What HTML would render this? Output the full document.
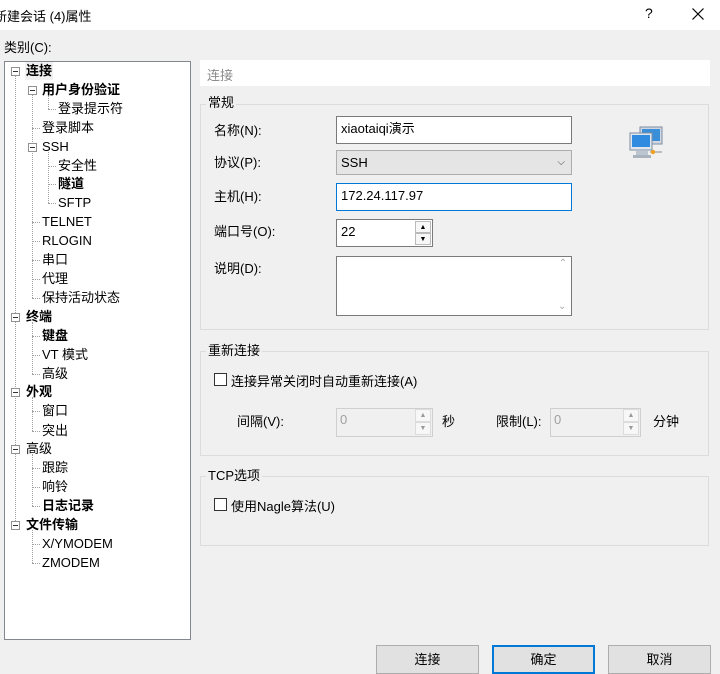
<!DOCTYPE html>
<html><head><meta charset="utf-8"><style>
*{margin:0;padding:0;box-sizing:border-box}
body{width:720px;height:674px;background:#f0f0f0;font-family:"Liberation Sans","Noto Sans CJK SC",sans-serif;font-size:13px;color:#000;position:relative;overflow:hidden}
.a{position:absolute;white-space:nowrap}
.t{position:absolute;line-height:18px;height:18px;white-space:nowrap}
.b{font-weight:bold}
.vl{position:absolute;border-left:1px dotted #a0a0a0;width:0}
.hl{position:absolute;border-top:1px dotted #a0a0a0;height:0}
.bx{position:absolute;width:9px;height:9px;border:1px solid #919191;background:#fff}
.bx:after{content:"";position:absolute;left:1px;top:3px;width:5px;height:1px;background:#333}
.inp{position:absolute;background:#fff;border:1px solid #7a7a7a;padding-left:4px;line-height:24px}
.grp{position:absolute;border:1px solid #dcdcdc}
.gl{position:absolute;background:#f0f0f0;padding:0 2px;line-height:16px}
.btn{position:absolute;top:645px;height:29px;width:103px;background:#e1e1e1;border:1px solid #adadad;text-align:center;line-height:27px}
.cb{position:absolute;width:13px;height:13px;border:1px solid #333;background:#fff}
.spin{position:absolute;border:1px solid #cfcfcf;background:#f0f0f0}
.sb{position:absolute;width:16px;height:13px;border:1px solid #dcdcdc;background:#f7f7f7;font-size:7px;text-align:center;line-height:11px;color:#999}
</style></head><body>
<div class="a" style="left:0;top:0;width:720px;height:30px;background:#fff"></div>
<div class="a" style="left:-6px;top:6px;font-size:13px">新建会话 (4)属性</div>
<div class="a" style="left:645px;top:5px;font-size:14px">?</div>
<svg class="a" style="left:692px;top:8px" width="12" height="12"><path d="M0.5 0.5L11.5 11.5M11.5 0.5L0.5 11.5" stroke="#000" stroke-width="1.2"/></svg>
<div class="a" style="left:4px;top:37px">类别(C):</div>

<div class="a" style="left:4px;top:61px;width:187px;height:579px;background:#fff;border:1px solid #828790"></div>
<div class="vl" style="left:15px;top:76px;height:449px"></div>
<div class="vl" style="left:32px;top:95px;height:203px"></div>
<div class="vl" style="left:32px;top:322px;height:52px"></div>
<div class="vl" style="left:32px;top:397px;height:34px"></div>
<div class="vl" style="left:32px;top:454px;height:52px"></div>
<div class="vl" style="left:32px;top:530px;height:33px"></div>
<div class="vl" style="left:48px;top:95px;height:14px"></div>
<div class="vl" style="left:48px;top:152px;height:51px"></div>
<div class="hl" style="left:32px;top:128px;width:8px"></div>
<div class="hl" style="left:32px;top:222px;width:8px"></div>
<div class="hl" style="left:32px;top:241px;width:8px"></div>
<div class="hl" style="left:32px;top:260px;width:8px"></div>
<div class="hl" style="left:32px;top:279px;width:8px"></div>
<div class="hl" style="left:32px;top:298px;width:8px"></div>
<div class="hl" style="left:32px;top:336px;width:8px"></div>
<div class="hl" style="left:32px;top:355px;width:8px"></div>
<div class="hl" style="left:32px;top:374px;width:8px"></div>
<div class="hl" style="left:32px;top:411px;width:8px"></div>
<div class="hl" style="left:32px;top:431px;width:8px"></div>
<div class="hl" style="left:32px;top:468px;width:8px"></div>
<div class="hl" style="left:32px;top:487px;width:8px"></div>
<div class="hl" style="left:32px;top:506px;width:8px"></div>
<div class="hl" style="left:32px;top:544px;width:8px"></div>
<div class="hl" style="left:32px;top:563px;width:8px"></div>
<div class="hl" style="left:48px;top:109px;width:8px"></div>
<div class="hl" style="left:48px;top:166px;width:8px"></div>
<div class="hl" style="left:48px;top:184px;width:8px"></div>
<div class="hl" style="left:48px;top:203px;width:8px"></div>
<div class="bx" style="left:11px;top:67px"></div>
<div class="bx" style="left:28px;top:86px"></div>
<div class="bx" style="left:28px;top:143px"></div>
<div class="bx" style="left:11px;top:313px"></div>
<div class="bx" style="left:11px;top:388px"></div>
<div class="bx" style="left:11px;top:445px"></div>
<div class="bx" style="left:11px;top:521px"></div>

<div class="t b" style="left:25px;top:62px;background:#f0f0f0;padding:0 1px">连接</div>
<div class="t b" style="left:42px;top:81px">用户身份验证</div>
<div class="t" style="left:58px;top:100px">登录提示符</div>
<div class="t" style="left:42px;top:119px">登录脚本</div>
<div class="t" style="left:42px;top:138px">SSH</div>
<div class="t" style="left:58px;top:157px">安全性</div>
<div class="t b" style="left:58px;top:175px">隧道</div>
<div class="t" style="left:58px;top:194px">SFTP</div>
<div class="t" style="left:42px;top:213px">TELNET</div>
<div class="t" style="left:42px;top:232px">RLOGIN</div>
<div class="t" style="left:42px;top:251px">串口</div>
<div class="t" style="left:42px;top:270px">代理</div>
<div class="t" style="left:42px;top:289px">保持活动状态</div>
<div class="t b" style="left:26px;top:308px">终端</div>
<div class="t b" style="left:42px;top:327px">键盘</div>
<div class="t" style="left:42px;top:346px">VT 模式</div>
<div class="t" style="left:42px;top:365px">高级</div>
<div class="t b" style="left:26px;top:383px">外观</div>
<div class="t" style="left:42px;top:402px">窗口</div>
<div class="t" style="left:42px;top:422px">突出</div>
<div class="t" style="left:26px;top:440px">高级</div>
<div class="t" style="left:42px;top:459px">跟踪</div>
<div class="t" style="left:42px;top:478px">响铃</div>
<div class="t b" style="left:42px;top:497px">日志记录</div>
<div class="t b" style="left:26px;top:516px">文件传输</div>
<div class="t" style="left:42px;top:535px">X/YMODEM</div>
<div class="t" style="left:42px;top:554px">ZMODEM</div>

<div class="a" style="left:200px;top:60px;width:510px;height:26px;background:#fff"></div>
<div class="a" style="left:207px;top:65px;color:#8a8a8a">连接</div>

<div class="grp" style="left:200px;top:104px;width:509px;height:226px"></div>
<div class="gl" style="left:206px;top:95px">常规</div>
<div class="a" style="left:214px;top:120px">名称(N):</div>
<div class="a" style="left:214px;top:152px">协议(P):</div>
<div class="a" style="left:214px;top:186px">主机(H):</div>
<div class="a" style="left:214px;top:221px">端口号(O):</div>
<div class="a" style="left:214px;top:258px">说明(D):</div>
<div class="inp" style="left:336px;top:116px;width:236px;height:28px">xiaotaiqi演示</div>
<div class="inp" style="left:336px;top:150px;width:236px;height:25px;background:#e5e5e5;border-color:#adadad;line-height:23px">SSH<span style="position:absolute;right:6px;top:0;font-size:10px;color:#444">⌵</span></div>
<div class="inp" style="left:336px;top:183px;width:236px;height:28px;border-color:#0078d7">172.24.117.97</div>
<div class="inp" style="left:336px;top:219px;width:97px;height:28px">22</div>
<div class="sb" style="left:415px;top:221px;height:12px;color:#000;border-color:#bbb">▲</div>
<div class="sb" style="left:415px;top:233px;height:12px;color:#000;border-color:#bbb">▼</div>
<div class="inp" style="left:336px;top:256px;width:236px;height:60px"></div>
<div class="a" style="left:555px;top:258px;width:16px;height:56px;color:#aaa;font-size:10px;text-align:center">⌃<br><br><span style="position:absolute;bottom:2px;left:3px">⌄</span></div>
<svg class="a" style="left:628px;top:124px" width="36" height="36" viewBox="0 0 36 36">
<rect x="12" y="3" width="22" height="17" fill="#cfd8e2" stroke="#7d8ea2"/>
<rect x="14" y="5" width="18" height="12" fill="#3b8fd9"/>
<rect x="2" y="9" width="22" height="17" fill="#dfe6ee" stroke="#7d8ea2"/>
<rect x="4" y="11" width="18" height="12" fill="#2e8be0"/>
<rect x="8" y="27" width="12" height="4" fill="#bcc6d0"/>
<rect x="5" y="31" width="18" height="3" fill="#a9b3be"/>
<line x1="22" y1="28" x2="34" y2="28" stroke="#8a8a8a"/>
<circle cx="25" cy="28" r="2.2" fill="#f0a020"/>
</svg>

<div class="grp" style="left:200px;top:351px;width:509px;height:105px"></div>
<div class="gl" style="left:206px;top:343px">重新连接</div>
<div class="cb" style="left:214px;top:373px"></div>
<div class="a" style="left:231px;top:371px">连接异常关闭时自动重新连接(A)</div>
<div class="a" style="left:237px;top:411px">间隔(V):</div>
<div class="spin" style="left:336px;top:408px;width:97px;height:29px"></div>
<div class="a" style="left:340px;top:412px;color:#a0a0a0">0</div>
<div class="sb" style="left:415px;top:409px">▲</div>
<div class="sb" style="left:415px;top:422px">▼</div>
<div class="a" style="left:442px;top:411px">秒</div>
<div class="a" style="left:496px;top:411px">限制(L):</div>
<div class="spin" style="left:550px;top:408px;width:91px;height:29px"></div>
<div class="a" style="left:554px;top:412px;color:#a0a0a0">0</div>
<div class="sb" style="left:623px;top:409px">▲</div>
<div class="sb" style="left:623px;top:422px">▼</div>
<div class="a" style="left:653px;top:411px">分钟</div>

<div class="grp" style="left:200px;top:476px;width:509px;height:70px"></div>
<div class="gl" style="left:206px;top:468px">TCP选项</div>
<div class="cb" style="left:214px;top:498px"></div>
<div class="a" style="left:231px;top:496px">使用Nagle算法(U)</div>

<div class="btn" style="left:376px">连接</div>
<div class="btn" style="left:492px;border:2px solid #0078d7;line-height:25px">确定</div>
<div class="btn" style="left:608px">取消</div>
</body></html>
